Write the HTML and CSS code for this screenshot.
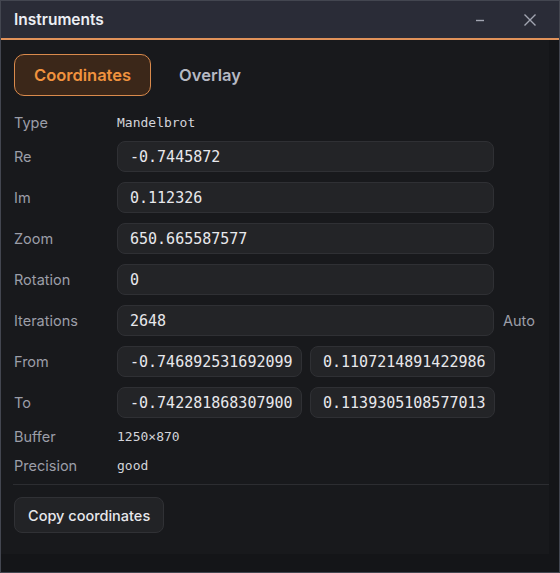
FILE: index.html
```html
<!DOCTYPE html>
<html lang="en">
<head>
  <meta charset="UTF-8">
  <title>Instruments</title>
  <link rel="stylesheet" href="styles.css">
</head>
<body>
  <div class="window">
    <div class="titlebar">
      <span class="title">Instruments</span>
      <div class="controls">
        <svg class="ctl" width="14" height="14" viewBox="0 0 14 14"><path d="M3 7.5h8" stroke="currentColor" stroke-width="1.4"/></svg>
        <svg class="ctl" width="14" height="14" viewBox="0 0 14 14"><path d="M1.5 1.5l11 11M12.5 1.5l-11 11" stroke="currentColor" stroke-width="1.4"/></svg>
      </div>
    </div>

    <div class="body">
      <div class="content">
        <div class="tabs">
          <button class="tab active">Coordinates</button>
          <button class="tab">Overlay</button>
        </div>

        <div class="grid">
          <div class="label">Type</div>
          <div class="value mono small">Mandelbrot</div>

          <div class="label">Re</div>
          <div class="field mono">-0.7445872</div>

          <div class="label">Im</div>
          <div class="field mono">0.112326</div>

          <div class="label">Zoom</div>
          <div class="field mono">650.665587577</div>

          <div class="label">Rotation</div>
          <div class="field mono">0</div>

          <div class="label">Iterations</div>
          <div class="with-extra">
            <div class="field mono">2648</div>
            <span class="extra">Auto</span>
          </div>

          <div class="label">From</div>
          <div class="pair">
            <div class="field mono">-0.746892531692099</div>
            <div class="field mono">0.1107214891422986</div>
          </div>

          <div class="label">To</div>
          <div class="pair">
            <div class="field mono">-0.742281868307900</div>
            <div class="field mono">0.1139305108577013</div>
          </div>

          <div class="label">Buffer</div>
          <div class="value mono small">1250×870</div>

          <div class="label spaced">Precision</div>
          <div class="value mono small spaced">good</div>
        </div>

        <hr class="divider">

        <button class="btn">Copy coordinates</button>
      </div>
    </div>
  </div>
</body>
</html>
```

FILE: styles.css
```css
html, body {
  margin: 0;
  height: 100%;
}
body {
  font-family: Inter, "Noto Sans", sans-serif;
  background-color: #17181b;
  color: #e6e6ea;
}
.window {
  box-sizing: border-box;
  height: 100%;
  display: flex;
  flex-direction: column;
  border: 1px solid #434650;
  background-color: #141518;
}
.titlebar {
  height: 37px;
  flex: none;
  display: flex;
  align-items: center;
  justify-content: space-between;
  padding: 0 22px 0 13px;
  background-color: #2a2c37;
  border-bottom: 2px solid #e0925a;
}
.title {
  font-size: 15.5px;
  font-weight: 600;
  color: #eceef3;
}
.controls {
  display: flex;
  gap: 36px;
  align-items: center;
  color: #a2a5b1;
}
.ctl {
  display: block;
}
.body {
  flex: 1;
  display: flex;
  padding: 0 10px 18px 0;
}
.content {
  flex: 1;
  padding: 14px 0 0 13px;
  background-color: #18191c;
}
.tabs {
  display: flex;
  gap: 8px;
  margin-bottom: 18px;
}
.tab {
  font-family: inherit;
  font-size: 16.5px;
  font-weight: 600;
  height: 42px;
  padding: 0 19px;
  border-radius: 10px;
  border: 1px solid transparent;
  background: none;
  color: #b6b9c4;
}
.tab.active {
  background-color: #3b2719;
  border-color: #d98a4c;
  color: #f0923e;
}
.grid {
  display: grid;
  grid-template-columns: 103px 1fr;
  row-gap: 10px;
  align-items: center;
}
.label {
  font-size: 14.5px;
  color: #9c9ea8;
}
.value {
  color: #d3d4da;
}
.spaced {
  margin-top: 2px;
}
.mono {
  font-family: "DejaVu Sans Mono", "Liberation Mono", monospace;
}
.small {
  font-size: 13px;
}
.field {
  box-sizing: border-box;
  height: 31px;
  display: flex;
  align-items: center;
  padding: 0 12px;
  font-size: 15px;
  color: #e8e8ec;
  background-color: #232427;
  border: 1px solid #2f3034;
  border-radius: 8px;
  width: 377px;
}
.with-extra {
  display: flex;
  align-items: center;
  gap: 9px;
}
.extra {
  font-size: 14.5px;
  color: #9c9ea8;
}
.pair {
  display: flex;
  gap: 8px;
}
.pair .field {
  width: 185px;
}
.divider {
  border: none;
  border-top: 1px solid #2c2d31;
  margin: 10px 0 12px -1px;
}
.btn {
  font-family: inherit;
  font-size: 14.5px;
  font-weight: 500;
  height: 36px;
  padding: 0 13px;
  color: #e8e8ec;
  background-color: #222326;
  border: 1px solid #303135;
  border-radius: 8px;
}
```
